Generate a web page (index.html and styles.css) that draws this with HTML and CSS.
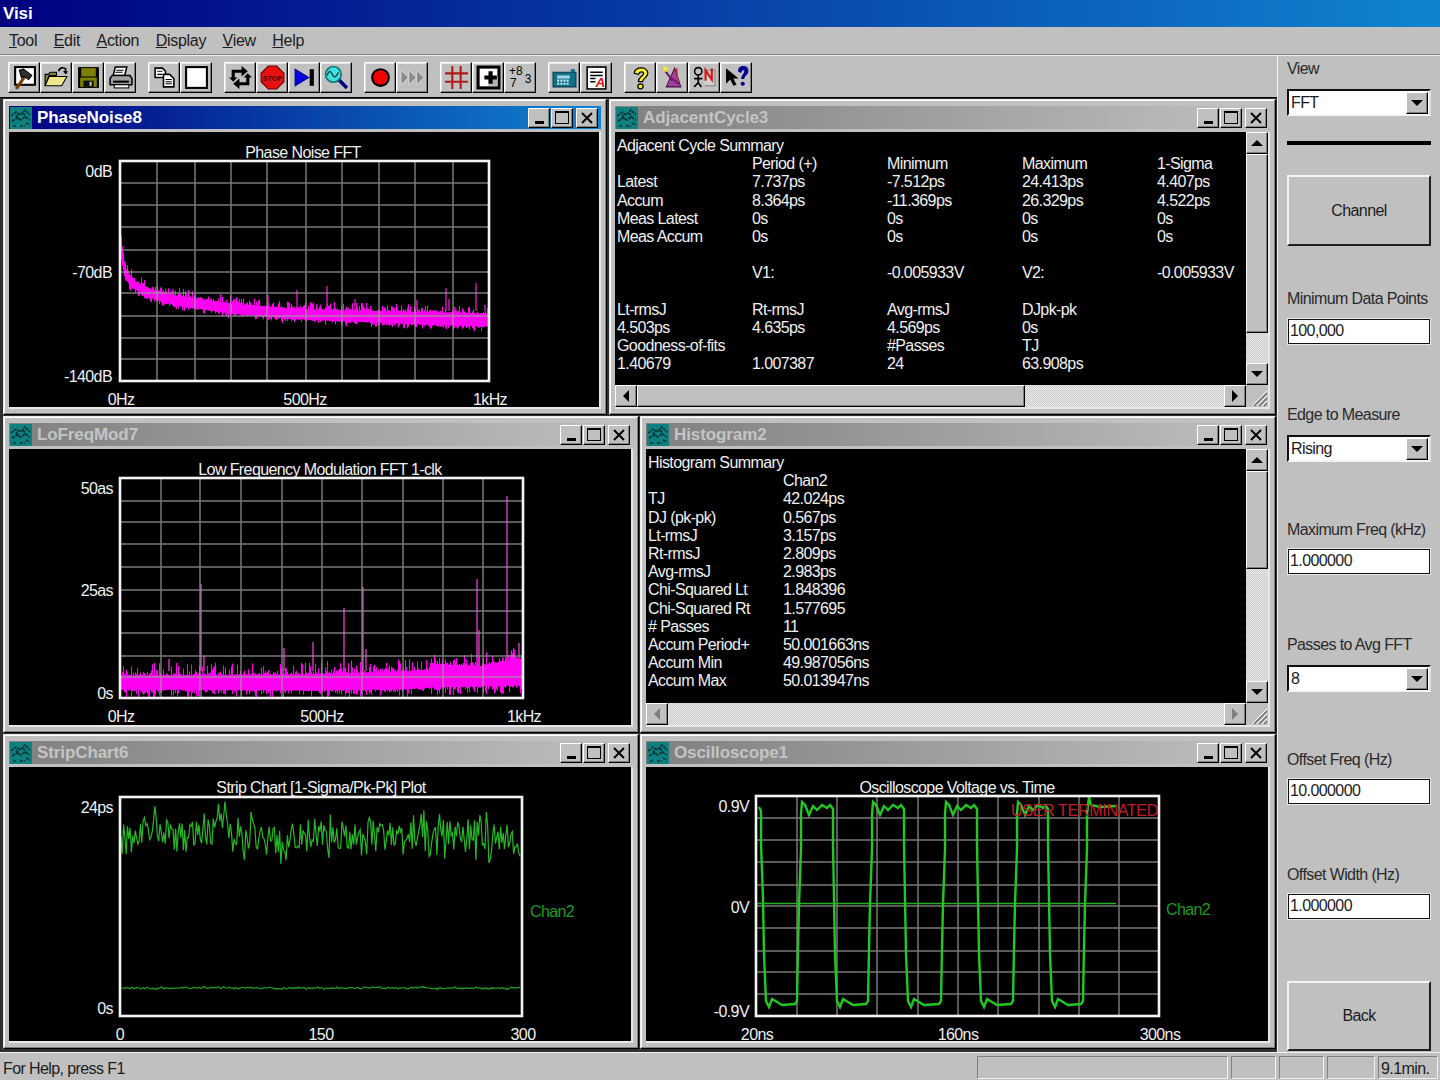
FILE: index.html
```html
<!doctype html>
<html lang="en">
<head>
    <meta charset="UTF-8">
    <title>Visi</title>
    <link rel="stylesheet" href="styles.css">
</head>
<body>
    <svg class="iconDefs" width="0" height="0">
        <symbol id="winIcon" viewBox="0 0 22 22">
            <rect width="22" height="22" fill="#0f8080"/>
            <path d="M1 9l5-4 4 3 5-5 5 5M2 14l5-3 4 2 4-3 5 3M3 19h4M10 19h5M16 16l4 2M6 8l3 4M13 6l3 4" fill="none" stroke="#04302f" stroke-width="1.6" stroke-dasharray="3 1"/>
        </symbol>
    </svg>

    <div class="app">
        <header class="appTitle">Visi</header>
        <nav class="menuBar">
            <span><u>T</u>ool</span>
            <span><u>E</u>dit</span>
            <span><u>A</u>ction</span>
            <span><u>D</u>isplay</span>
            <span><u>V</u>iew</span>
            <span><u>H</u>elp</span>
        </nav>

        <div class="appBody">
            <div class="leftColumn">
                <div class="toolBar">
                    <div class="toolGroup">
                        <button class="toolBtn"><svg class="toolIcon" viewBox="0 0 24 24"><rect x="3" y="2" width="19" height="17" fill="#fff" stroke="#000" stroke-width="2"/><path d="M4 23l9-13" stroke="#7a3c00" stroke-width="3"/><path d="M7 5l4-1 8 6-3 4-4-3-3 1z" fill="#303030" stroke="#000"/></svg></button>
                        <button class="toolBtn"><svg class="toolIcon" viewBox="0 0 24 24"><path d="M1 9h3l2-2h6v3H5L1 20z" fill="#808040" stroke="#000"/><path d="M1 20l4-9h17l-5 9z" fill="#f0e68c" stroke="#000"/><path d="M14 6c1-4 5-4 7-2l-1 3" fill="none" stroke="#000" stroke-width="1.5"/><path d="M18 6h5l-2 3z"/></svg></button>
                        <button class="toolBtn"><svg class="toolIcon" viewBox="0 0 24 24"><rect x="2" y="2" width="20" height="20" fill="#000"/><rect x="5" y="3" width="14" height="8" fill="#808000"/><rect x="4" y="12" width="16" height="9" fill="#808000"/><rect x="7" y="15" width="10" height="6" fill="#111"/><rect x="13" y="16" width="2" height="4" fill="#c0c0c0"/></svg></button>
                        <button class="toolBtn"><svg class="toolIcon" viewBox="0 0 24 24"><path d="M7 2h11l-2 8H5z" fill="#fff" stroke="#000" stroke-width="1.5"/><path d="M8 5h7M7 7h7" stroke="#000"/><path d="M4 10h17l2 3v6H2v-6z" fill="#a0a0a0" stroke="#000" stroke-width="1.5"/><path d="M5 16h15" stroke="#000" stroke-width="2"/><rect x="6" y="19" width="14" height="3" fill="#fff" stroke="#000"/></svg></button>
                    </div>
                    <div class="toolGroup">
                        <button class="toolBtn"><svg class="toolIcon" viewBox="0 0 24 24"><path d="M3 3h7l3 3v6H3z" fill="#fff" stroke="#000" stroke-width="1.5"/><path d="M5 6h5M5 9h5" stroke="#000"/><path d="M11 9h6l4 4v8H11z" fill="#fff" stroke="#000" stroke-width="1.5"/><path d="M13 14h6M13 16h6M13 18h6" stroke="#000"/></svg></button>
                        <button class="toolBtn"><svg class="toolIcon" viewBox="0 0 24 24"><rect x="2" y="2" width="20" height="20" fill="#fff" stroke="#000" stroke-width="2"/></svg></button>
                    </div>
                    <div class="toolGroup">
                        <button class="toolBtn"><svg class="toolIcon" viewBox="0 0 24 24"><path d="M5 13V6h9" fill="none" stroke="#000" stroke-width="3"/><path d="M13 1l6 5-6 5z"/><path d="M19 11v7h-9" fill="none" stroke="#000" stroke-width="3"/><path d="M11 13l-6 5 6 5z"/><path d="M1 12l4 4 4-4zM15 12l4-4 4 4z"/></svg></button>
                        <button class="toolBtn"><svg class="toolIcon" viewBox="0 0 24 24"><path d="M8 1h8l7 7v8l-7 7H8l-7-7V8z" fill="#e81010" stroke="#600" stroke-width="1"/><text class="stopText" x="12" y="15">STOP</text></svg></button>
                        <button class="toolBtn"><svg class="toolIcon" viewBox="0 0 24 24"><path d="M3 4l13 8-13 8z" fill="#0000e0" stroke="#000080"/><rect x="17" y="4" width="4" height="16"/></svg></button>
                        <button class="toolBtn"><svg class="toolIcon" viewBox="0 0 24 24"><path d="M14 14l8 8" stroke="#000080" stroke-width="3.5"/><circle cx="9" cy="9" r="7.5" fill="#40e0e0" stroke="#107070" stroke-width="1.5"/><path d="M3 10c2-5 3-5 5-1s3 3 6-2" fill="none" stroke="#004040" stroke-width="1.3"/></svg></button>
                    </div>
                    <div class="toolGroup">
                        <button class="toolBtn"><svg class="toolIcon" viewBox="0 0 24 24"><circle cx="12" cy="12" r="8" fill="#f00000" stroke="#000" stroke-width="2"/></svg></button>
                        <button class="toolBtn"><svg class="toolIcon" viewBox="0 0 24 24"><path d="M1 5l7 7-7 7zM8.500 5l7 7-7 7zM16 5l7 7-7 7z" fill="#8a8a8a" stroke="#e6e6e6" stroke-width=".7"/></svg></button>
                    </div>
                    <div class="toolGroup">
                        <button class="toolBtn"><svg class="toolIcon" viewBox="0 0 24 24"><path d="M8 1v22M16 1v22M1 8h22M1 16h22" stroke="#b01818" stroke-width="2"/></svg></button>
                        <button class="toolBtn"><svg class="toolIcon" viewBox="0 0 24 24"><rect x="2" y="2" width="20" height="20" fill="#fff" stroke="#000" stroke-width="3"/><path d="M12 11h9v9h-9z" fill="#b0b0b0"/><path d="M14 6v12M8 12h12" stroke="#000" stroke-width="4"/></svg></button>
                        <button class="toolBtn"><svg class="toolIcon" viewBox="0 0 24 24"><text class="digitText" x="1" y="10">+8</text><text class="digitText" x="2" y="21">7</text><text class="digitText" x="16" y="17">3</text></svg></button>
                    </div>
                    <div class="toolGroup">
                        <button class="toolBtn"><svg class="toolIcon" viewBox="0 0 24 24"><path d="M1 7h22v14H1z" fill="#0f7088" stroke="#083848"/><path d="M18 4h4v3h-4z" fill="#0f7088"/><rect x="5" y="10" width="12" height="3" fill="#a8d8e8"/><path d="M5 15h12M5 18h12" stroke="#c8e8f0" stroke-width="2" stroke-dasharray="2 1"/></svg></button>
                        <button class="toolBtn"><svg class="toolIcon" viewBox="0 0 24 24"><rect x="3" y="2" width="18" height="21" fill="#fff" stroke="#000" stroke-width="1.5"/><path d="M4 2v-1M8 2v-1M12 2v-1M16 2v-1M20 2v-1" stroke="#000"/><path d="M6 7h12M6 10h12M6 13h5M6 16h5" stroke="#000" stroke-width="1.5"/><text class="noteText" x="11" y="21">A</text></svg></button>
                    </div>
                    <div class="toolGroup">
                        <button class="toolBtn"><svg class="toolIcon" viewBox="0 0 24 24"><path d="M6 8c0-7 13-7 13 0 0 4-5 5-5 8h-4c0-5 5-5 5-8 0-2-4-2-5 1z" fill="#f8f020" stroke="#000" stroke-width="1.2"/><circle cx="12" cy="20.500" r="2.500" fill="#f8f020" stroke="#000" stroke-width="1.2"/></svg></button>
                        <button class="toolBtn"><svg class="toolIcon" viewBox="0 0 24 24"><path d="M14 3L6 21h14z" fill="#a040a0" stroke="#401040"/><path d="M3 3l9 12M10 12l8 6" stroke="#701870" stroke-width="2"/><circle cx="5" cy="4" r="2.500" fill="#f0e040"/><path d="M16 3l1 14" stroke="#d03030" stroke-width="1.5"/></svg></button>
                        <button class="toolBtn"><svg class="toolIcon" viewBox="0 0 24 24"><circle cx="6" cy="6" r="3.500" fill="none" stroke="#000" stroke-width="1.5"/><path d="M6 10v8M2 21l4-4 3 4M2 13h8" fill="none" stroke="#000" stroke-width="1.6"/><path d="M12 5h10v15H12" fill="#d0d0d0" stroke="#808080"/><path d="M13 15V5l6 9V3" fill="none" stroke="#e01010" stroke-width="2"/></svg></button>
                        <button class="toolBtn"><svg class="toolIcon" viewBox="0 0 24 24"><path d="M2 3v15l4-4 3 6 3-1-3-6h5z"/><path d="M14 6c0-6 9-6 9 0 0 3-4 4-4 7h-2c0-4 3-4 3-7 0-2-3-2-4 1z" fill="#000090" stroke="#000090"/><circle cx="18" cy="18" r="2" fill="#000090"/></svg></button>
                    </div>
                </div>

                <main class="mdiArea">
                    <div class="mdiRow mdiRowTop">
                        <section class="mdiWin">
                            <div class="winTitle isActive">
                                <svg class="winIcon"><use href="#winIcon"/></svg>
                                <span class="winName">PhaseNoise8</span>
                                <div class="winBtns">
                                    <span class="winBtn"><i class="minGlyph"></i></span><span class="winBtn"><i class="maxGlyph"></i></span><span class="winBtn closeBtn"><svg viewBox="0 0 12 12"><path d="M1 1l10 10M11 1L1 11" stroke="#000" stroke-width="2"/></svg></span>
                                </div>
                            </div>
                            <div class="winClient">
                                <svg class="chart" id="phaseChart" viewBox="9 133 590 275">
                                    <text class="chartText" x="303" y="159" text-anchor="middle">Phase Noise FFT</text>
                                    <text class="chartText" x="112" y="178" text-anchor="end">0dB</text>
                                    <text class="chartText" x="112" y="279" text-anchor="end">-70dB</text>
                                    <text class="chartText" x="112" y="383" text-anchor="end">-140dB</text>
                                    <text class="chartText" x="121" y="406" text-anchor="middle">0Hz</text>
                                    <text class="chartText" x="305" y="406" text-anchor="middle">500Hz</text>
                                    <text class="chartText" x="490" y="406" text-anchor="middle">1kHz</text>
                                </svg>
                            </div>
                        </section>

                        <section class="mdiWin">
                            <div class="winTitle">
                                <svg class="winIcon"><use href="#winIcon"/></svg>
                                <span class="winName">AdjacentCycle3</span>
                                <div class="winBtns">
                                    <span class="winBtn"><i class="minGlyph"></i></span><span class="winBtn"><i class="maxGlyph"></i></span><span class="winBtn closeBtn"><svg viewBox="0 0 12 12"><path d="M1 1l10 10M11 1L1 11" stroke="#000" stroke-width="2"/></svg></span>
                                </div>
                            </div>
                            <div class="winClient scrollClient">
                                <div class="summaryText">
                                    <span class="fullRow">Adjacent Cycle Summary</span>
                                    <span></span><span>Period (+)</span><span>Minimum</span><span>Maximum</span><span>1-Sigma</span>
                                    <span>Latest</span><span>7.737ps</span><span>-7.512ps</span><span>24.413ps</span><span>4.407ps</span>
                                    <span>Accum</span><span>8.364ps</span><span>-11.369ps</span><span>26.329ps</span><span>4.522ps</span>
                                    <span>Meas Latest</span><span>0s</span><span>0s</span><span>0s</span><span>0s</span>
                                    <span>Meas Accum</span><span>0s</span><span>0s</span><span>0s</span><span>0s</span>
                                    <span class="fullRow">&nbsp;</span>
                                    <span></span><span>V1:</span><span>-0.005933V</span><span>V2:</span><span>-0.005933V</span>
                                    <span class="fullRow">&nbsp;</span>
                                    <span>Lt-rmsJ</span><span>Rt-rmsJ</span><span>Avg-rmsJ</span><span>DJpk-pk</span><span></span>
                                    <span>4.503ps</span><span>4.635ps</span><span>4.569ps</span><span>0s</span><span></span>
                                    <span>Goodness-of-fits</span><span></span><span>#Passes</span><span>TJ</span><span></span>
                                    <span>1.40679</span><span>1.007387</span><span>24</span><span>63.908ps</span><span></span>
                                </div>
                                <div class="vScroll">
                                    <span class="scrollBtn"><i class="arrowUp"></i></span>
                                    <span class="vThumb adjacentThumb"></span>
                                    <span class="scrollTrack"></span>
                                    <span class="scrollBtn"><i class="arrowDown"></i></span>
                                </div>
                                <div class="hScroll">
                                    <span class="scrollBtn"><i class="arrowLeft"></i></span>
                                    <span class="hThumb"></span>
                                    <span class="scrollTrack"></span>
                                    <span class="scrollBtn"><i class="arrowRight"></i></span>
                                </div>
                                <div class="sizeGrip"><svg viewBox="0 0 22 22"><path d="M21 6L6 21M21 11L11 21M21 16L16 21" stroke="#fff" stroke-width="1"/><path d="M21 8L8 21M21 13L13 21M21 18L18 21" stroke="#707070" stroke-width="1.4"/></svg></div>
                            </div>
                        </section>
                    </div>

                    <div class="mdiRow">
                        <section class="mdiWin">
                            <div class="winTitle">
                                <svg class="winIcon"><use href="#winIcon"/></svg>
                                <span class="winName">LoFreqMod7</span>
                                <div class="winBtns">
                                    <span class="winBtn"><i class="minGlyph"></i></span><span class="winBtn"><i class="maxGlyph"></i></span><span class="winBtn closeBtn"><svg viewBox="0 0 12 12"><path d="M1 1l10 10M11 1L1 11" stroke="#000" stroke-width="2"/></svg></span>
                                </div>
                            </div>
                            <div class="winClient">
                                <svg class="chart" id="lofreqChart" viewBox="9 450 622 276">
                                    <text class="chartText" x="320" y="476" text-anchor="middle">Low Frequency Modulation FFT 1-clk</text>
                                    <text class="chartText" x="113" y="495" text-anchor="end">50as</text>
                                    <text class="chartText" x="113" y="597" text-anchor="end">25as</text>
                                    <text class="chartText" x="113" y="700" text-anchor="end">0s</text>
                                    <text class="chartText" x="121" y="723" text-anchor="middle">0Hz</text>
                                    <text class="chartText" x="322" y="723" text-anchor="middle">500Hz</text>
                                    <text class="chartText" x="524" y="723" text-anchor="middle">1kHz</text>
                                </svg>
                            </div>
                        </section>

                        <section class="mdiWin">
                            <div class="winTitle">
                                <svg class="winIcon"><use href="#winIcon"/></svg>
                                <span class="winName">Histogram2</span>
                                <div class="winBtns">
                                    <span class="winBtn"><i class="minGlyph"></i></span><span class="winBtn"><i class="maxGlyph"></i></span><span class="winBtn closeBtn"><svg viewBox="0 0 12 12"><path d="M1 1l10 10M11 1L1 11" stroke="#000" stroke-width="2"/></svg></span>
                                </div>
                            </div>
                            <div class="winClient scrollClient">
                                <div class="summaryText histogramText">
                                    <span class="fullRow">Histogram Summary</span>
                                    <span></span><span>Chan2</span>
                                    <span>TJ</span><span>42.024ps</span>
                                    <span>DJ (pk-pk)</span><span>0.567ps</span>
                                    <span>Lt-rmsJ</span><span>3.157ps</span>
                                    <span>Rt-rmsJ</span><span>2.809ps</span>
                                    <span>Avg-rmsJ</span><span>2.983ps</span>
                                    <span>Chi-Squared Lt</span><span>1.848396</span>
                                    <span>Chi-Squared Rt</span><span>1.577695</span>
                                    <span># Passes</span><span>11</span>
                                    <span>Accum Period+</span><span>50.001663ns</span>
                                    <span>Accum Min</span><span>49.987056ns</span>
                                    <span>Accum Max</span><span>50.013947ns</span>
                                </div>
                                <div class="vScroll">
                                    <span class="scrollBtn"><i class="arrowUp"></i></span>
                                    <span class="vThumb histogramThumb"></span>
                                    <span class="scrollTrack"></span>
                                    <span class="scrollBtn"><i class="arrowDown"></i></span>
                                </div>
                                <div class="hScroll">
                                    <span class="scrollBtn"><i class="arrowLeft isDisabled"></i></span>
                                    <span class="scrollTrack"></span>
                                    <span class="scrollBtn"><i class="arrowRight isDisabled"></i></span>
                                </div>
                                <div class="sizeGrip"><svg viewBox="0 0 22 22"><path d="M21 6L6 21M21 11L11 21M21 16L16 21" stroke="#fff" stroke-width="1"/><path d="M21 8L8 21M21 13L13 21M21 18L18 21" stroke="#707070" stroke-width="1.4"/></svg></div>
                            </div>
                        </section>
                    </div>

                    <div class="mdiRow">
                        <section class="mdiWin">
                            <div class="winTitle">
                                <svg class="winIcon"><use href="#winIcon"/></svg>
                                <span class="winName">StripChart6</span>
                                <div class="winBtns">
                                    <span class="winBtn"><i class="minGlyph"></i></span><span class="winBtn"><i class="maxGlyph"></i></span><span class="winBtn closeBtn"><svg viewBox="0 0 12 12"><path d="M1 1l10 10M11 1L1 11" stroke="#000" stroke-width="2"/></svg></span>
                                </div>
                            </div>
                            <div class="winClient">
                                <svg class="chart" id="stripChart" viewBox="9 768 622 274">
                                    <text class="chartText" x="321" y="794" text-anchor="middle">Strip Chart [1-Sigma/Pk-Pk] Plot</text>
                                    <text class="chartText" x="113" y="814" text-anchor="end">24ps</text>
                                    <text class="chartText" x="113" y="1015" text-anchor="end">0s</text>
                                    <text class="chartText" x="120" y="1041" text-anchor="middle">0</text>
                                    <text class="chartText" x="321" y="1041" text-anchor="middle">150</text>
                                    <text class="chartText" x="523" y="1041" text-anchor="middle">300</text>
                                    <text class="chartText chanText" x="530" y="918">Chan2</text>
                                </svg>
                            </div>
                        </section>

                        <section class="mdiWin">
                            <div class="winTitle">
                                <svg class="winIcon"><use href="#winIcon"/></svg>
                                <span class="winName">Oscilloscope1</span>
                                <div class="winBtns">
                                    <span class="winBtn"><i class="minGlyph"></i></span><span class="winBtn"><i class="maxGlyph"></i></span><span class="winBtn closeBtn"><svg viewBox="0 0 12 12"><path d="M1 1l10 10M11 1L1 11" stroke="#000" stroke-width="2"/></svg></span>
                                </div>
                            </div>
                            <div class="winClient">
                                <svg class="chart" id="scopeChart" viewBox="646 768 622 274">
                                    <text class="chartText" x="957" y="794" text-anchor="middle">Oscilloscope Voltage vs. Time</text>
                                    <text class="chartText" x="749" y="813" text-anchor="end">0.9V</text>
                                    <text class="chartText" x="749" y="914" text-anchor="end">0V</text>
                                    <text class="chartText" x="749" y="1018" text-anchor="end">-0.9V</text>
                                    <text class="chartText" x="757" y="1041" text-anchor="middle">20ns</text>
                                    <text class="chartText" x="958" y="1041" text-anchor="middle">160ns</text>
                                    <text class="chartText" x="1160" y="1041" text-anchor="middle">300ns</text>
                                    <text class="chartText chanText" x="1166" y="916">Chan2</text>
                                    <text class="chartText termText" x="1011" y="817">USER TERMINATED</text>
                                </svg>
                            </div>
                        </section>
                    </div>
                </main>
            </div>

            <aside class="sidePanel">
                <div class="sideLabel">View</div>
                <div class="comboBox"><span class="comboValue">FFT</span><span class="comboBtn"><i class="arrowDown"></i></span></div>
                <div class="sideDivider"></div>
                <button class="bigBtn">Channel</button>

                <div class="sideField firstField">
                    <div class="sideLabel">Minimum Data Points</div>
                    <input class="textField" value="100,000">
                </div>
                <div class="sideField">
                    <div class="sideLabel">Edge to Measure</div>
                    <div class="comboBox"><span class="comboValue">Rising</span><span class="comboBtn"><i class="arrowDown"></i></span></div>
                </div>
                <div class="sideField">
                    <div class="sideLabel">Maximum Freq (kHz)</div>
                    <input class="textField" value="1.000000">
                </div>
                <div class="sideField">
                    <div class="sideLabel">Passes to Avg FFT</div>
                    <div class="comboBox"><span class="comboValue">8</span><span class="comboBtn"><i class="arrowDown"></i></span></div>
                </div>
                <div class="sideField">
                    <div class="sideLabel">Offset Freq (Hz)</div>
                    <input class="textField" value="10.000000">
                </div>
                <div class="sideField">
                    <div class="sideLabel">Offset Width (Hz)</div>
                    <input class="textField" value="1.000000">
                </div>
                <button class="bigBtn backBtn">Back</button>
            </aside>
        </div>

        <footer class="statusBar">
            <span class="statusText">For Help, press F1</span>
            <span class="statusPane paneWide"></span>
            <span class="statusPane"></span>
            <span class="statusPane"></span>
            <span class="statusPane paneMid"></span>
            <span class="statusPane paneTime">9.1min.</span>
        </footer>
    </div>

    <script src="script.js"></script>
</body>
</html>
```

FILE: styles.css
```css
* {
    box-sizing: border-box;
}

html, body {
    margin: 0;
    padding: 0;
}

body {
    width: 1440px;
    height: 1080px;
    overflow: hidden;
    background-color: #c0c0c0;
    color: #1c1c1c;
    font-family: "Liberation Sans", Arial, sans-serif;
    font-size: 16px;
    letter-spacing: -0.6px;
}

.iconDefs {
    display: block;
    height: 0;
}

.app {
    display: flex;
    flex-direction: column;
    height: 1080px;
}

.appTitle {
    height: 27px;
    padding: 4px 0 0 3px;
    background: linear-gradient(90deg, #000080, #1084d0);
    color: #ffffff;
    font-weight: bold;
    font-size: 17px;
    letter-spacing: -0.1px;
}

.menuBar {
    display: flex;
    gap: 16.5px;
    height: 28px;
    padding: 5px 0 0 9px;
    border-bottom: 1px solid #808080;
    letter-spacing: -0.3px;
}

.appBody {
    display: flex;
    height: 997px;
    border-top: 1px solid #f0f0f0;
}

.leftColumn {
    display: flex;
    flex-direction: column;
    width: 1277px;
}

.toolBar {
    display: flex;
    gap: 12px;
    height: 41px;
    padding: 6px 0 0 8px;
}

.toolGroup {
    display: flex;
}

.toolBtn {
    display: flex;
    align-items: center;
    justify-content: center;
    width: 32px;
    height: 31px;
    padding: 0;
    background-color: #c0c0c0;
    border: 1px solid;
    border-color: #ffffff #000000 #000000 #ffffff;
    box-shadow: inset -1px -1px #808080, inset 1px 1px #e4e4e4;
}

.toolIcon {
    width: 25px;
    height: 25px;
}

.stopText {
    fill: #500000;
    font-size: 7px;
    font-weight: bold;
    letter-spacing: 0;
    text-anchor: middle;
}

.digitText {
    font-size: 11.5px;
    letter-spacing: 0;
}

.noteText {
    fill: #e01010;
    font-size: 13px;
    font-weight: bold;
    font-style: italic;
}

.mdiArea {
    display: grid;
    grid-template-rows: 316px 317px 315px;
    gap: 1px;
    height: 955px;
    padding: 1px 1px 2px 2px;
    background-color: #303030;
    border-top: 1px solid #000000;
    border-left: 1px solid #303030;
}

.mdiRow {
    display: grid;
    grid-template-columns: 636px 1fr;
    gap: 1px;
}

.mdiRowTop {
    grid-template-columns: 604px 1fr;
    gap: 2px;
}

.mdiWin {
    display: flex;
    flex-direction: column;
    gap: 3px;
    min-width: 0;
    padding: 6px 5px 5px;
    background-color: #c0c0c0;
    border: 1px solid;
    border-color: #e8e8e8 #000000 #000000 #e8e8e8;
    box-shadow: inset -1px -1px #808080, inset 1px 1px #ffffff;
}

.winTitle {
    display: flex;
    align-items: center;
    flex: none;
    height: 23px;
    background: linear-gradient(90deg, #808080, #c0c0c0);
    color: #c4c4c4;
    font-weight: bold;
    font-size: 17px;
    letter-spacing: -0.1px;
}

.winTitle.isActive {
    background: linear-gradient(90deg, #000080, #1084d0);
    color: #ffffff;
}

.winIcon {
    width: 22px;
    height: 22px;
    margin: 0 5px 0 1px;
}

.winBtns {
    display: flex;
    gap: 1px;
    margin-left: auto;
    margin-right: 3px;
}

.winBtn {
    display: flex;
    align-items: center;
    justify-content: center;
    width: 22px;
    height: 20px;
    background-color: #c0c0c0;
    border: 1px solid;
    border-color: #ffffff #000000 #000000 #ffffff;
    box-shadow: inset -1px -1px #808080;
}

.closeBtn {
    margin-left: 2px;
}

.closeBtn svg {
    width: 12px;
    height: 12px;
}

.minGlyph {
    width: 9px;
    height: 3px;
    margin-top: 9px;
    background-color: #000000;
}

.maxGlyph {
    width: 14px;
    height: 13px;
    border: 1px solid #000000;
    border-top-width: 2px;
}

.winClient {
    flex: 1;
    min-height: 0;
    background-color: #000000;
    border-right: 2px solid #e8e8e8;
    border-bottom: 2px solid #e8e8e8;
}

.chart {
    display: block;
    width: 100%;
    height: 100%;
    overflow: visible;
}

.chartText {
    fill: #f0f0f0;
    font-size: 16px;
}

.chanText {
    fill: #1c9c1c;
}

.termText {
    fill: #c01c28;
    letter-spacing: -0.3px;
}

.scrollClient {
    display: grid;
    grid-template-columns: minmax(0, 1fr) 22px;
    grid-template-rows: minmax(0, 1fr) 22px;
}

.summaryText {
    display: grid;
    grid-template-columns: repeat(5, 135px);
    grid-auto-rows: 18.2px;
    padding: 5px 0 0 2px;
    color: #f0f0f0;
    line-height: 18px;
    white-space: nowrap;
}

.histogramText {
    grid-template-columns: repeat(2, 135px);
}

.fullRow {
    grid-column: 1 / -1;
}

.vScroll {
    display: flex;
    flex-direction: column;
    min-height: 0;
}

.hScroll {
    display: flex;
    min-width: 0;
}

.scrollBtn {
    display: flex;
    align-items: center;
    justify-content: center;
    flex: none;
    width: 22px;
    height: 22px;
    background-color: #c0c0c0;
    border: 1px solid;
    border-color: #ffffff #000000 #000000 #ffffff;
    box-shadow: inset -1px -1px #808080;
}

.vThumb, .hThumb {
    flex: none;
    background-color: #c0c0c0;
    border: 1px solid;
    border-color: #ffffff #000000 #000000 #ffffff;
    box-shadow: inset -1px -1px #808080;
}

.adjacentThumb {
    height: 179px;
}

.histogramThumb {
    height: 98px;
}

.hThumb {
    width: 388px;
}

.scrollTrack {
    flex: 1;
    background: repeating-conic-gradient(#ececec 0 25%, #c8c8c8 0 50%) 0 0 / 2px 2px;
}

.sizeGrip {
    background-color: #c0c0c0;
}

.sizeGrip svg {
    display: block;
}

.arrowUp, .arrowDown {
    width: 0;
    height: 0;
    border-left: 6px solid transparent;
    border-right: 6px solid transparent;
}

.arrowUp {
    border-bottom: 6px solid #000000;
}

.arrowDown {
    border-top: 6px solid #000000;
}

.arrowLeft, .arrowRight {
    width: 0;
    height: 0;
    border-top: 6px solid transparent;
    border-bottom: 6px solid transparent;
}

.arrowLeft {
    border-right: 6px solid #000000;
}

.arrowRight {
    border-left: 6px solid #000000;
}

.arrowLeft.isDisabled {
    border-right-color: #808080;
}

.arrowRight.isDisabled {
    border-left-color: #808080;
}

.sidePanel {
    display: flex;
    flex-direction: column;
    width: 163px;
    padding: 4px 9px 2px 9px;
    border-left: 1px solid #f0f0f0;
}

.sideLabel {
    height: 18px;
    line-height: 18px;
    white-space: nowrap;
    color: #2a2a2a;
}

.comboBox {
    display: flex;
    align-items: center;
    flex: none;
    width: 144px;
    height: 27px;
    margin-top: 11px;
    padding: 1px;
    background-color: #ffffff;
    border: 2px solid #101010;
    border-right-color: #e0e0e0;
    border-bottom-color: #f4f4f4;
}

.comboValue {
    flex: 1;
    padding-left: 1px;
}

.comboBtn {
    display: flex;
    align-items: center;
    justify-content: center;
    width: 22px;
    height: 22px;
    background-color: #c0c0c0;
    border: 1px solid;
    border-color: #ffffff #000000 #000000 #ffffff;
    box-shadow: inset -1px -1px #808080;
}

.sideDivider {
    flex: none;
    height: 4px;
    margin-top: 25px;
    background-color: #000000;
}

.bigBtn {
    flex: none;
    width: 144px;
    height: 71px;
    margin-top: 30px;
    padding: 0;
    background-color: #c0c0c0;
    color: #1c1c1c;
    font: inherit;
    letter-spacing: inherit;
    border: 2px solid;
    border-color: #f4f4f4 #202020 #202020 #f4f4f4;
}

.sideField {
    flex: none;
    height: 57px;
    margin-bottom: 58px;
}

.firstField {
    margin-top: 44px;
    margin-bottom: 59px;
}

.textField {
    display: block;
    width: 144px;
    height: 27px;
    margin-top: 9px;
    padding: 0 1px 2px;
    background-color: #ffffff;
    color: #1c1c1c;
    font: inherit;
    letter-spacing: inherit;
    border: 2px solid #101010;
    outline: 1px solid #e8e8e8;
    outline-offset: -1px;
    border-radius: 0;
}

.firstField .textField {
    margin-top: 10px;
}

.backBtn {
    height: 70px;
    margin-top: auto;
}

.statusBar {
    display: flex;
    align-items: stretch;
    gap: 3px;
    height: 28px;
    padding: 3px 2px 1px 3px;
    border-top: 1px solid #f0f0f0;
}

.statusText {
    margin-right: auto;
    line-height: 25px;
}

.statusPane {
    width: 45px;
    line-height: 23px;
    padding-left: 2px;
    border: 1px solid;
    border-color: #808080 #f0f0f0 #f0f0f0 #808080;
}

.paneWide {
    width: 251px;
}

.paneMid {
    width: 48px;
}

.paneTime {
    width: 60px;
}
```

FILE: script.js
```js
// plots are drawn here, coordinates are page pixels (see each svg viewBox)
const svgNS = 'http://www.w3.org/2000/svg';

let seed = 12345;
function rand() {
    seed = (seed * 1664525 + 1013904223) % 4294967296;
    return seed / 4294967296;
}

function addPath(svg, d, stroke, width, opacity) {
    const path = document.createElementNS(svgNS, 'path');
    path.setAttribute('d', d);
    path.setAttribute('fill', 'none');
    path.setAttribute('stroke', stroke);
    path.setAttribute('stroke-width', width);
    if (opacity) {
        path.setAttribute('opacity', opacity);
    }
    svg.insertBefore(path, svg.firstChild);
    return path;
}

// insertBefore puts the newest path at the back, so layers are added top first
function addFrame(svg, box) {
    const rect = document.createElementNS(svgNS, 'rect');
    rect.setAttribute('x', box.x0);
    rect.setAttribute('y', box.y0);
    rect.setAttribute('width', box.x1 - box.x0);
    rect.setAttribute('height', box.y1 - box.y0);
    rect.setAttribute('fill', 'none');
    rect.setAttribute('stroke', '#f4f4f4');
    rect.setAttribute('stroke-width', '2.6');
    svg.insertBefore(rect, svg.firstChild);
}

function addGrid(svg, box, xs, ys) {
    let d = '';
    xs.forEach(x => d += `M${x} ${box.y0}V${box.y1}`);
    ys.forEach(y => d += `M${box.x0} ${y}H${box.x1}`);
    addPath(svg, d, '#9a9a9a', 1.5, 0.78);
}

function interp(points, x) {
    for (let i = 1; i < points.length; i++) {
        if (x <= points[i][0]) {
            const a = points[i - 1];
            const b = points[i];
            return a[1] + (b[1] - a[1]) * (x - a[0]) / (b[0] - a[0]);
        }
    }
    return points[points.length - 1][1];
}

// mostly solid band, a few columns stick out past the edges
function bandPath(x0, x1, top, bottom, jitter) {
    let d = '';
    for (let x = x0; x <= x1; x++) {
        const t = interp(top, x) + 1.5 - Math.pow(rand(), 3) * jitter * 1.6;
        const b = interp(bottom, x) - 1.5 + Math.pow(rand(), 3) * jitter;
        d += `M${x + 0.5} ${t.toFixed(1)}V${b.toFixed(1)}`;
    }
    return d;
}

function spikePath(spikes, base) {
    return spikes.map(s => `M${s[0]} ${base}V${s[1]}`).join('');
}

function drawPhase() {
    const svg = document.getElementById('phaseChart');
    const box = { x0: 120, y0: 162, x1: 489, y1: 382 };
    addFrame(svg, box);
    addGrid(svg, box, [157, 195, 231, 267, 306, 342, 379, 415, 453], [184, 206, 228, 251, 273, 294, 317, 339, 360]);
    const top = [[121, 236], [123, 258], [127, 272], [135, 281], [150, 289], [175, 295], [230, 303], [300, 309], [400, 311], [487, 313]];
    const bottom = [[121, 262], [124, 278], [130, 289], [145, 299], [175, 308], [230, 316], [300, 322], [400, 326], [487, 329]];
    addPath(svg, bandPath(121, 487, top, bottom, 5), '#ff00f0', 1.1);
    addPath(svg, spikePath([[268, 296], [297, 291], [327, 287], [355, 300], [417, 301], [446, 289], [449, 300], [476, 284], [485, 306]], 312), '#d020b8', 1.4);
}

function drawLofreq() {
    const svg = document.getElementById('lofreqChart');
    const box = { x0: 120, y0: 479, x1: 523, y1: 699 };
    addFrame(svg, box);
    addGrid(svg, box, [161, 200, 241, 282, 322, 362, 403, 443, 483], [502, 523, 545, 568, 591, 612, 634, 657, 678]);
    const top = [[121, 675], [300, 674], [400, 671], [428, 669], [432, 663], [480, 666], [490, 663], [521, 658]];
    const bottom = [[121, 692], [300, 693], [400, 692], [430, 690], [521, 688]];
    addPath(svg, bandPath(121, 521, top, bottom, 8), '#ff00f0', 1.1);
    addPath(svg, spikePath([[169, 660], [201, 585], [204, 657], [284, 649], [313, 643], [344, 609], [363, 588], [366, 650], [477, 580], [479, 631], [507, 497], [519, 644]], 672), '#c030a8', 1.6);
}

function noiseLine(x0, x1, y, amp, spike) {
    let d = `M${x0} ${y}`;
    let drift = 0;
    for (let x = x0 + 1.3; x < x1; x += 1.3) {
        drift = drift * 0.75 + (rand() - 0.5) * amp * 0.35;
        const value = drift + (rand() - 0.5) * amp * (rand() < 0.25 ? spike : 1);
        d += `L${x.toFixed(1)} ${(y + value).toFixed(1)}`;
    }
    return d;
}

function drawStrip() {
    const svg = document.getElementById('stripChart');
    const box = { x0: 120, y0: 798, x1: 522, y1: 1017 };
    addFrame(svg, box);
    addPath(svg, noiseLine(121, 521, 989, 1.6, 1.6), '#1f9f1f', 1.2);
    addPath(svg, noiseLine(121, 521, 838, 30, 1.8), '#26b826', 1.2);
}

function scopeHigh(pts, x0, x1) {
    pts.push([x0, 803], [x0 + 3, 806], [x0 + 7, 816], [x0 + 11, 807], [x0 + 15, 811], [x0 + 20, 806], [x0 + 25, 809]);
    pts.push([x1 - 3, 806], [x1, 810]);
}

function scopeLow(pts, x0, x1) {
    pts.push([x0, 1002], [x0 + 3, 1008], [x0 + 6, 1000], [x0 + 11, 1003], [x0 + 16, 1006]);
    pts.push([x1 - 2, 1005], [x1, 1002]);
}

function drawScope() {
    const svg = document.getElementById('scopeChart');
    const box = { x0: 756, y0: 797, x1: 1159, y1: 1017 };
    addFrame(svg, box);
    const pts = [[759, 808], [761, 812], [761, 845]];
    // fall and rise edges, x where the trace leaves one level for the other
    const edges = [[763, 797], [834, 868], [905, 941], [978, 1013], [1049, 1083]];
    edges.forEach((edge, i) => {
        const fall = edge[0];
        const rise = edge[1];
        pts.push([fall, 900], [fall + 1, 955], [fall + 3, 1002]);
        scopeLow(pts, fall + 3, rise);
        pts.push([rise + 1, 950], [rise + 2, 905], [rise + 4, 850], [rise + 4, 815]);
        if (i < 4) {
            scopeHigh(pts, rise + 5, edges[i + 1][0] - 1);
            pts.push([edges[i + 1][0] - 1, 845]);
        } else {
            pts.push([rise + 6, 798]);
            pts.push([rise + 8, 806], [1100, 808], [1116, 807]);
        }
    });
    const clip = pts.map(p => [p[0], Math.max(p[1], 798)]);
    const d = 'M' + clip.map(p => p.join(' ')).join('L');
    addPath(svg, d, '#22c822', 2.4);
    addPath(svg, 'M757 904.5H1116', '#22b022', 1.4);
    addGrid(svg, box, [797, 837, 877, 918, 958, 998, 1039, 1079, 1119], [819, 841, 863, 886, 907, 929, 952, 973, 995]);
}

drawPhase();
drawLofreq();
drawStrip();
drawScope();
```
